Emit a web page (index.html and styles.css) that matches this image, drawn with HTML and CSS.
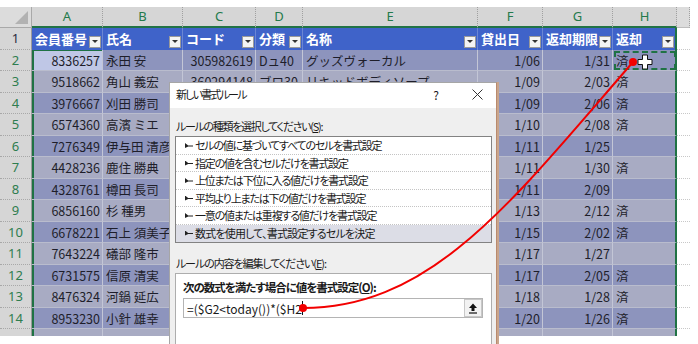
FILE: index.html
```html
<!DOCTYPE html>
<html lang="ja">
  <head>
    <meta charset="UTF-8" />
    <meta name="viewport" content="width=device-width, initial-scale=1.0" />
    <title>新しい書式ルール</title>
    <link rel="stylesheet" href="styles.css">
  </head>
  <body>
    <div class="sheet">
      <div class="row col-head">
        <div class="corner"><span class="tri"></span></div>
        <div class="letter">A</div>
        <div class="letter">B</div>
        <div class="letter">C</div>
        <div class="letter">D</div>
        <div class="letter">E</div>
        <div class="letter">F</div>
        <div class="letter">G</div>
        <div class="letter">H</div>
        <div class="letter plain"></div>
      </div>
      <div class="row">
        <div class="num first">1</div>
        <div class="th">会員番号<span class="filter"></span></div>
        <div class="th">氏名<span class="filter"></span></div>
        <div class="th">コード<span class="filter"></span></div>
        <div class="th">分類<span class="filter"></span></div>
        <div class="th">名称<span class="filter"></span></div>
        <div class="th">貸出日<span class="filter"></span></div>
        <div class="th">返却期限<span class="filter"></span></div>
        <div class="th last">返却<span class="filter"></span></div>
        <div class="blank"></div>
      </div>
      <div class="rows"></div>
    </div>

    <div class="dialog">
      <div class="dlg-title">
        <span class="dlg-name">新しい書式ルール</span>
        <span class="help">?</span>
        <svg class="close" width="11" height="11" viewBox="0 0 11 11">
          <path d="M0.5 0.5 L10.5 10.5 M10.5 0.5 L0.5 10.5" stroke="#333" stroke-width="1" />
        </svg>
      </div>
      <div class="dlg-body">
        <p class="dlg-label">ルールの種類を選択してください(<u>S</u>):</p>
        <ul class="rule-list">
          <li>セルの値に基づいてすべてのセルを書式設定</li>
          <li>指定の値を含むセルだけを書式設定</li>
          <li>上位または下位に入る値だけを書式設定</li>
          <li>平均より上または下の値だけを書式設定</li>
          <li>一意の値または重複する値だけを書式設定</li>
          <li class="picked">数式を使用して、書式設定するセルを決定</li>
        </ul>
        <p class="dlg-label second">ルールの内容を編集してください(<u>E</u>):</p>
        <div class="rule-panel">
          <p class="panel-label">次の数式を満たす場合に値を書式設定(<u>O</u>):</p>
          <div class="formula">
            <span class="formula-text">=($G2&lt;today())*($H2</span><span class="caret"></span>
            <span class="ref-btn">
              <svg width="10" height="11" viewBox="0 0 10 11">
                <path d="M5 0.5 L9 5 H6.5 V8 H3.5 V5 H1 Z" fill="#111" />
                <path d="M1 10 H9" stroke="#111" stroke-width="1.2" />
              </svg>
            </span>
          </div>
        </div>
      </div>
    </div>

    <svg class="overlay" width="698" height="344" viewBox="0 0 698 344">
      <path d="M303 308 C433 308 513 200 633 62" fill="none" stroke="#f20000" stroke-width="2" />
      <circle cx="303" cy="308" r="4" fill="#f20000" />
      <circle cx="633" cy="62" r="4" fill="#f20000" />
      <path d="M642.5 55 h5 v4.5 h4.5 v5 h-4.5 v4.5 h-5 v-4.5 h-4.5 v-5 h4.5 z" fill="#fff" stroke="#111" stroke-width="1" />
    </svg>

    <script>
      const members = [
        ["8336257", "永田 安", "305982619", "Dュ40", "グッズヴォーカル", "1/06", "1/31", "済"],
        ["9518662", "角山 義宏", "360294148", "ブロ30", "リキッドボディソープ", "1/09", "2/03", "済"],
        ["3976667", "刈田 勝司", "412583106", "Aコ20", "ハンドクリーム", "1/09", "2/06", "済"],
        ["6574360", "高濱 ミエ", "208816537", "Cメ10", "フェイスタオル", "1/10", "2/08", "済"],
        ["7276349", "伊与田 清彦", "517249830", "Bス50", "バスマット", "1/11", "1/25", ""],
        ["4428236", "鹿住 勝典", "309471255", "Dュ40", "マグカップ", "1/11", "1/30", "済"],
        ["4328761", "樽田 長司", "620158374", "Aコ20", "ブックカバー", "1/11", "2/09", ""],
        ["6856160", "杉 種男", "145839206", "Cメ10", "ボールペン", "1/13", "2/12", "済"],
        ["6678221", "石上 須美子", "733602419", "Bス50", "ノートセット", "1/15", "2/02", "済"],
        ["7643224", "礒部 隆市", "281947560", "Dュ40", "クリアファイル", "1/17", "1/27", ""],
        ["6731575", "信原 清実", "458210397", "Aコ20", "トートバッグ", "1/17", "2/05", "済"],
        ["8476324", "河鍋 延広", "390675128", "Cメ10", "キーホルダー", "1/18", "1/28", "済"],
        ["8953230", "小針 雄幸", "612483957", "Bス50", "ステッカー", "1/20", "1/26", "済"],
        ["", "", "", "", "", "", "", ""],
      ];

      function addRow(m, i) {
        const n = i + 2;
        const band = n % 2 === 0 ? "band" : "";
        // the last row is only a sliver at the bottom edge
        const label = m[0] ? n : "";
        document.querySelector(".rows").innerHTML += `<div class="row ${band}">
            <div class="num">${label}</div>
            <div class="td right col-a ${n === 2 ? "active" : ""}">${m[0]}</div>
            <div class="td">${m[1]}</div>
            <div class="td right">${m[2]}</div>
            <div class="td">${m[3]}</div>
            <div class="td">${m[4]}</div>
            <div class="td right">${m[5]}</div>
            <div class="td right">${m[6]}</div>
            <div class="td last ${n === 2 ? "copy" : ""}">${m[7]}</div>
            <div class="blank"></div>
          </div>`;
      }

      members.forEach((m, i) => addRow(m, i));
    </script>
  </body>
</html>
```

FILE: styles.css
```css
body {
  margin: 0;
  width: 698px;
  height: 344px;
  overflow: hidden;
  position: relative;
  background: #fff;
  font-family: "Noto Sans CJK JP", sans-serif;
  color: #222;
}

.sheet {
  margin-top: 7px;
  width: 690px;
  height: 329px;
  overflow: hidden;
}

.row {
  display: grid;
  grid-template-columns: 32px 71px 80px 73px 47px 175px 65px 70px 64px 13px;
  height: 21.5px;
}

.row > div {
  box-sizing: border-box;
  overflow: hidden;
  white-space: nowrap;
}

.col-head {
  height: 21px;
}

.corner {
  background: #dcdcdc;
  border-right: 1px solid #a9a9a9;
  border-bottom: 1px solid #a9a9a9;
  display: flex;
  justify-content: flex-end;
  align-items: flex-end;
  padding: 0 3px 3px 0;
}

.tri {
  width: 13px;
  height: 13px;
  background: #b2b2b2;
  clip-path: polygon(100% 0, 100% 100%, 0 100%);
}

.letter {
  background: #d6d6d6;
  color: #237a4b;
  font-family: "Noto Sans", sans-serif;
  font-size: 13px;
  line-height: 19px;
  text-align: center;
  border-right: 1px dotted #a0a0a0;
  border-bottom: 2px solid #217346;
}

.letter.plain {
  background: #dcdcdc;
  border-bottom: 1px solid #bdbdbd;
}

.num {
  background: #d6d6d6;
  color: #2e7d4f;
  font-family: "Noto Sans", sans-serif;
  font-size: 13px;
  line-height: 21px;
  text-align: center;
  border-right: 1px solid #9a9a9a;
  border-bottom: 1px dotted #a8a8a8;
}

.num.first {
  color: #2a2a40;
}

.th {
  background: #3f63c9;
  color: #fff;
  font-size: 13px;
  font-weight: bold;
  line-height: 21px;
  padding-left: 3px;
  display: flex;
  justify-content: space-between;
  border-right: 1px solid #6b86d4;
}

.th.last {
  border-right: 2px solid #1f7244;
}

.filter {
  align-self: flex-end;
  flex-shrink: 0;
  width: 12px;
  height: 12px;
  margin: 0 1px 2px 0;
  background: #f4f4f4;
  border: 1px solid #9a9a9a;
  box-sizing: border-box;
  display: flex;
  justify-content: center;
  align-items: center;
}

.filter::after {
  content: "";
  border-left: 3px solid transparent;
  border-right: 3px solid transparent;
  border-top: 3px solid #333;
}

.td {
  background: #a8abc3;
  font-size: 12.5px;
  line-height: 21px;
  padding: 0 2px 0 3px;
  border-right: 1px solid #c3c6d6;
  border-bottom: 1px solid #b9bccd;
  color: #1e1e2a;
}

.band .td {
  background: #8d94bd;
}

.td.right {
  text-align: right;
}

.td.col-a {
  box-shadow: inset 2px 0 0 #1f7244;
}

.td.active {
  background: #bfc7e6;
  box-shadow: inset 2px 0 0 #1f7244, inset 0 1px 0 #1f7244;
}

.td.last {
  border-right: 2px solid #1f7244;
}

.td.copy {
  outline: 2px dashed #1f7244;
  outline-offset: -3px;
}

.blank {
  background: #fff;
  border-bottom: 1px dotted #c8c8c8;
}

/* dialog */

.dialog {
  position: absolute;
  left: 169px;
  top: 82px;
  width: 328px;
  height: 290px;
  box-sizing: border-box;
  border: 1px solid #a6a6a6;
  border-right-color: #b98a6e;
  box-shadow: 2px 0 0 #c9a58c;
  background: #efefef;
  font-size: 11px;
  font-feature-settings: "palt";
  color: #1a1a1a;
}

.dlg-title {
  height: 25px;
  background: #fff;
  display: flex;
  align-items: center;
  padding: 0 0 3px 6px;
  box-sizing: border-box;
}

.dlg-name {
  flex: 1;
  letter-spacing: -1.8px;
}

.help {
  margin-right: 33px;
  font-size: 12px;
}

.close {
  margin-right: 13px;
}

.dlg-body {
  padding: 0 4px 0 5px;
}

.dlg-label {
  margin: 10px 0 2px 1px;
  line-height: 16px;
  letter-spacing: -1.3px;
}

.dlg-label.second {
  margin-top: 12px;
  letter-spacing: -1.1px;
}

.rule-list {
  list-style: none;
  margin: 0;
  padding: 0;
  background: #fff;
  border: 1px solid #828282;
  font-size: 11px;
  letter-spacing: -1.2px;
}

.rule-list li {
  height: 17.5px;
  line-height: 17px;
  box-sizing: border-box;
  padding-left: 19px;
  border-bottom: 1px dotted #c4c4c4;
  position: relative;
}

.rule-list li:last-child {
  border-bottom: none;
}

.rule-list li::before {
  content: "";
  position: absolute;
  left: 9px;
  top: 6px;
  width: 8px;
  height: 5px;
  background: #222;
  clip-path: polygon(0 0, 40% 50%, 100% 50%, 100% 70%, 40% 70%, 0 100%);
}

.rule-list li.picked {
  background: #dcdde6;
  letter-spacing: -0.8px;
}

.rule-panel {
  background: #fff;
  border: 1px solid #adadad;
  height: 80px;
  padding: 5px 8px 0 7px;
}

.panel-label {
  margin: 0;
  line-height: 16px;
  font-size: 11.5px;
  font-weight: bold;
  letter-spacing: -1px;
}

.formula {
  margin-top: 3px;
  height: 20px;
  box-sizing: border-box;
  border: 1px solid #b4b4b4;
  display: flex;
  align-items: center;
  padding-left: 3px;
  font-size: 12px;
}

.caret {
  width: 1px;
  height: 14px;
  background: #111;
}

.ref-btn {
  margin-left: auto;
  width: 18px;
  height: 18px;
  box-sizing: border-box;
  border: 1px solid #c8c8c8;
  background: #f2f2f2;
  display: flex;
  justify-content: center;
  align-items: center;
}

.overlay {
  position: absolute;
  left: 0;
  top: 0;
  pointer-events: none;
}
```
